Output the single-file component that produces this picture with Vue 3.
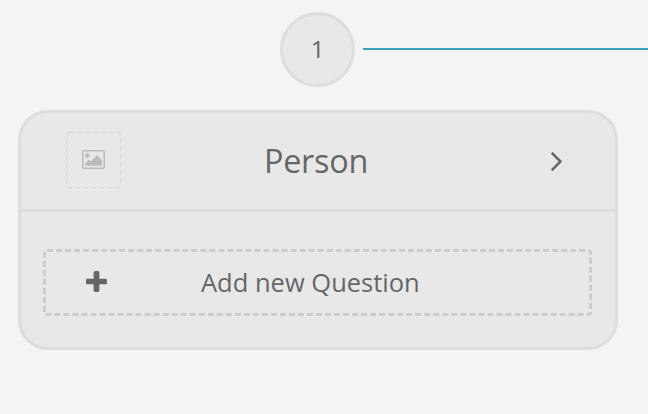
<script setup>
const step = 1
const title = 'Person'
const addLabel = 'Add new Question'
</script>

<template>
  <main class="page">
    <header class="stepper">
      <div class="step"><span class="num">{{ step }}</span></div>
      <div class="line"></div>
    </header>
    <section class="card">
      <div class="head">
        <div class="thumb">
          <svg class="frame" viewBox="0 0 55 56">
            <rect x=".5" y=".5" width="54" height="55" rx="2.500" />
          </svg>
          <svg class="picture" viewBox="-64 128 1920 1536" preserveAspectRatio="none">
            <path d="M576 576q0 80-56 136t-136 56-136-56-56-136 56-136 136-56 136 56 56 136zm1024 384v448h-1408v-192l320-320 160 160 512-512zm96-704h-1600q-13 0-22.500 9.500t-9.500 22.500v1216q0 13 9.500 22.500t22.500 9.500h1600q13 0 22.500-9.500t9.500-22.500v-1216q0-13-9.500-22.500t-22.500-9.500zm160 32v1216q0 66-47 113t-113 47h-1600q-66 0-113-47t-47-113v-1216q0-66 47-113t113-47h1600q66 0 113 47t47 113z" />
          </svg>
        </div>
        <h1 class="title"><span>{{ title }}</span></h1>
        <svg class="angle" viewBox="589 461 582 998">
          <path d="M1171 960q0 13-10 23l-466 466q-10 10-23 10t-23-10l-50-50q-10-10-10-23t10-23l393-393-393-393q-10-10-10-23t10-23l50-50q10-10 23-10t23 10l466 466q10 10 10 23z" />
        </svg>
      </div>
      <div class="body">
        <button class="add" type="button">
          <svg class="plus" viewBox="192 128 1408 1408">
            <path d="M1600 736v192q0 40-28 68t-68 28h-416v416q0 40-28 68t-68 28h-192q-40 0-68-28t-28-68v-416h-416q-40 0-68-28t-28-68v-192q0-40 28-68t68-28h416v-416q0-40 28-68t68-28h192q40 0 68 28t28 68v416h416q40 0 68 28t28 68z" />
          </svg>
          <span class="label">{{ addLabel }}</span>
        </button>
      </div>
    </section>
  </main>
</template>

<style>
body {
  background: #f4f4f4;
}
</style>

<style scoped>
* {
  box-sizing: border-box;
}
.page {
  height: 414px;
  padding: 12px 0 0 18px;
  overflow: hidden;
  background: #f4f4f4;
  color: #666;
  font-family: "Open Sans", sans-serif;
}
svg {
  display: block;
  flex: none;
  fill: currentColor;
}
.stepper {
  display: flex;
  align-items: center;
  gap: 8px;
  padding-left: 262px;
}
.step {
  display: flex;
  flex: none;
  align-items: center;
  justify-content: center;
  width: 75px;
  height: 75px;
  padding-bottom: 2px;
  border: 3px solid #ddd;
  border-radius: 50%;
  background: #e8e8e8;
  font-size: 24px;
  line-height: 33px;
}
.line {
  flex: 1;
  height: 2px;
  margin-bottom: 1px;
  background: #3ba1bb;
}
.card {
  width: 600px;
  height: 240px;
  margin-top: 23px;
  border: 3px solid #ddd;
  border-radius: 30px;
  background: #e8e8e8;
}
.head {
  display: flex;
  align-items: center;
  height: 99px;
  padding: 0 53px 0 45px;
  border-bottom: 3px solid #ddd;
}
.thumb {
  display: grid;
  place-items: center;
  width: 55px;
  height: 56px;
  margin-bottom: 2px;
  color: #bbb;
}
.frame,
.picture {
  grid-area: 1 / 1;
}
.frame {
  width: 55px;
  height: 56px;
  fill: none;
  stroke: #d5d5d5;
  stroke-width: 1;
  stroke-dasharray: 5 3;
}
.picture {
  width: 23px;
  height: 19px;
  margin-bottom: 1px;
}
.title {
  flex: 1;
  margin: 0 0 3px;
  padding-right: 40px;
  font-size: 32.4px;
  font-weight: 400;
  line-height: 44px;
  letter-spacing: -0.3px;
  text-align: center;
}
.angle {
  width: 11px;
  height: 19px;
}
.body {
  padding: 37px 23px 0 22px;
}
.add {
  display: flex;
  align-items: center;
  width: 549px;
  height: 67px;
  padding: 0 40px;
  border: 3px dashed #ccc;
  border-radius: 4px;
  background: none;
  color: inherit;
  font: inherit;
}
.plus {
  width: 21px;
  height: 21px;
  margin-bottom: 3px;
}
.label {
  margin: 0 0 1px 94px;
  font-size: 25.5px;
  line-height: 34px;
  white-space: nowrap;
}
</style>
